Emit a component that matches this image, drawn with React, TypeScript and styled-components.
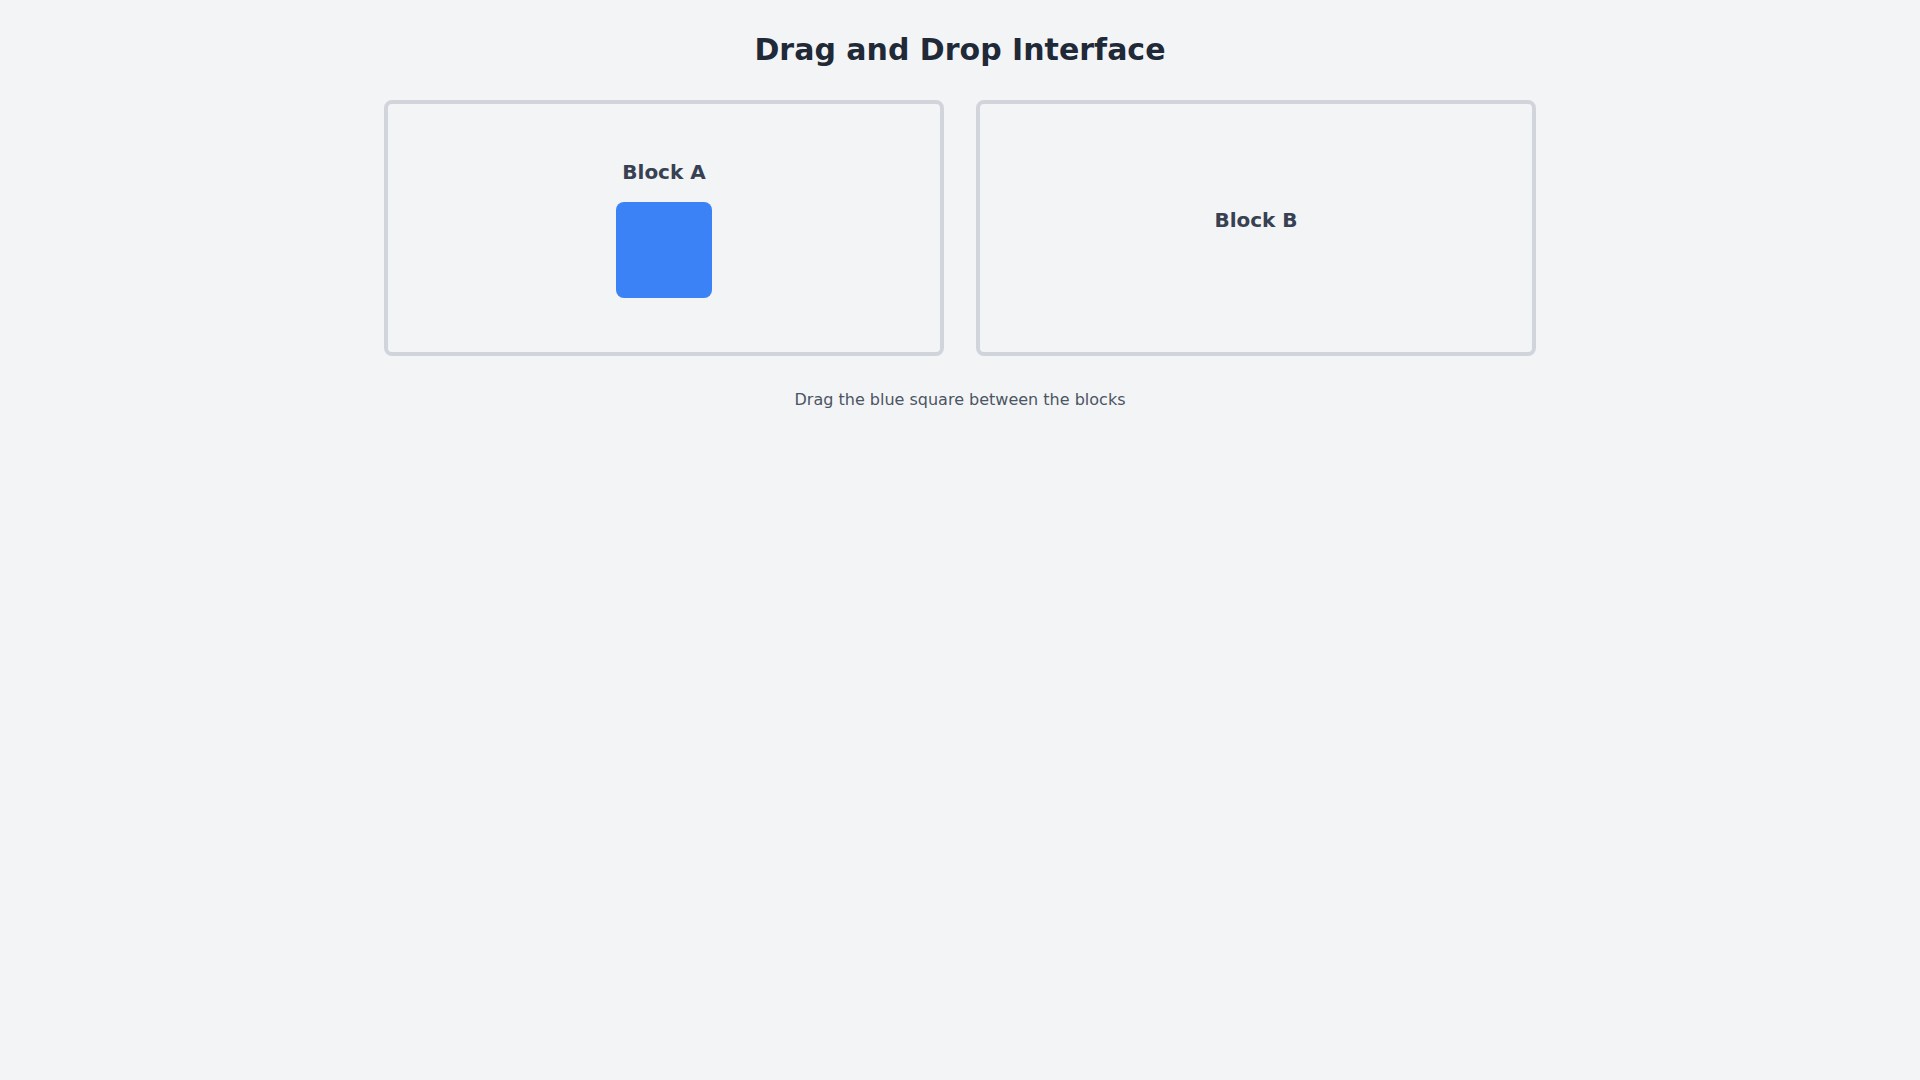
import React from 'react';
import styled, { createGlobalStyle } from 'styled-components';

const GlobalStyle = createGlobalStyle`
  html, body {
    margin: 0;
    padding: 0;
    background: #f3f4f6;
  }

  body {
    font-family: "DejaVu Sans", sans-serif;
    min-height: 100vh;
  }
`;

const Page = styled.div`
  min-height: 100vh;
  padding: 32px;
  box-sizing: border-box;
  background: #f3f4f6;
`;

const Title = styled.h1`
  margin: 0 0 32px;
  font-size: 30px;
  line-height: 36px;
  font-weight: 700;
  color: #1f2937;
  text-align: center;
`;

const Blocks = styled.div`
  display: grid;
  grid-template-columns: 1fr 1fr;
  gap: 32px;
  max-width: 1152px;
  margin: 0 auto;
`;

const Block = styled.div`
  height: 256px;
  box-sizing: border-box;
  border: 4px solid #d1d5db;
  border-radius: 8px;
  display: flex;
  flex-direction: column;
  align-items: center;
  justify-content: center;
`;

const BlockLabel = styled.h2`
  margin: 0 0 16px;
  font-size: 20px;
  line-height: 28px;
  font-weight: 700;
  color: #374151;
`;

const Square = styled.div`
  width: 96px;
  height: 96px;
  border-radius: 8px;
  background: #3b82f6;
  cursor: move;
`;

const Hint = styled.p`
  margin: 32px 0 0;
  font-size: 16px;
  line-height: 24px;
  color: #4b5563;
  text-align: center;
`;

export default function App() {
  return (
    <>
      <GlobalStyle />
      <Page>
        <Title>Drag and Drop Interface</Title>
        <Blocks>
          <Block>
            <BlockLabel>Block A</BlockLabel>
            <Square draggable />
          </Block>
          <Block>
            <BlockLabel>Block B</BlockLabel>
          </Block>
        </Blocks>
        <Hint>Drag the blue square between the blocks</Hint>
      </Page>
    </>
  );
}
